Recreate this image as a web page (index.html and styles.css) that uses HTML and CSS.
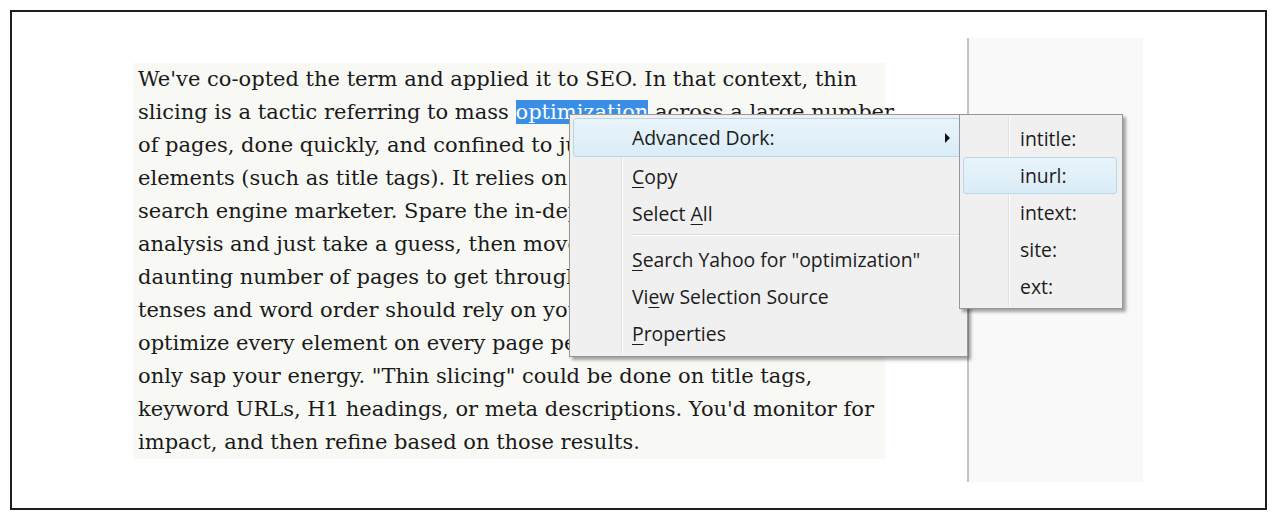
FILE: index.html
```html
<!DOCTYPE html>
<html>
<head>
<meta charset="utf-8">
<link rel="stylesheet" href="styles.css">
</head>
<body>
<div class="frame">
  <div class="page">
    <div class="article">
      <p class="text">We've co-opted the term and applied it to SEO. In that context, thin<br>slicing is a tactic referring to mass <span class="sel">optimization</span> across a large number<br>of pages, done quickly, and confined to just a few<br>elements (such as title tags). It relies on the<br>search engine marketer. Spare the in-depth<br>analysis and just take a guess, then move on<br>daunting number of pages to get through<br>tenses and word order should rely on your<br>optimize every element on every page per<br>only sap your energy. "Thin slicing" could be done on title tags,<br>keyword URLs, H1 headings, or meta descriptions. You'd monitor for<br>impact, and then refine based on those results.</p>
    </div>
    <div class="divider"></div>
    <div class="side"></div>
  </div>

  <div class="menu main-menu">
    <div class="gutter"></div>
    <div class="item active"><span class="label">Advanced Dork:</span><span class="arrow"></span></div>
    <div class="item"><span class="label"><u>C</u>opy</span></div>
    <div class="item"><span class="label">Select <u>A</u>ll</span></div>
    <div class="sep"></div>
    <div class="item"><span class="label"><u>S</u>earch Yahoo for "optimization"</span></div>
    <div class="item"><span class="label">Vi<u>e</u>w Selection Source</span></div>
    <div class="item"><span class="label"><u>P</u>roperties</span></div>
  </div>

  <div class="menu sub-menu">
    <div class="gutter"></div>
    <div class="item"><span class="label">intitle:</span></div>
    <div class="item active"><span class="label">inurl:</span></div>
    <div class="item"><span class="label">intext:</span></div>
    <div class="item"><span class="label">site:</span></div>
    <div class="item"><span class="label">ext:</span></div>
  </div>
</div>
</body>
</html>
```

FILE: styles.css
```css
html, body {
  margin: 0;
  padding: 0;
  background: #ffffff;
}

.frame {
  position: relative;
  margin: 10px 0 0 10px;
  width: 1257px;
  height: 500px;
  box-sizing: border-box;
  border: 2px solid #1e1e1e;
}

.page {
  display: flex;
  padding-top: 26px;
}

.article {
  width: 955px;
  flex: none;
}

.text {
  margin: 25px 0 0 121px;
  width: 752px;
  padding: 0 0 0 5px;
  box-sizing: border-box;
  background: #f8f9f5;
  font-family: "DejaVu Serif", Georgia, serif;
  font-size: 21px;
  line-height: 33px;
  color: #1a1a1a;
  white-space: nowrap;
}

.sel {
  background: #3a8ee6;
  color: #ffffff;
}

.divider {
  width: 2px;
  height: 444px;
  background: #c4c4c4;
  flex: none;
}

.side {
  width: 174px;
  height: 444px;
  background: #f9f9f9;
  flex: none;
}

.menu {
  position: absolute;
  box-sizing: border-box;
  background: #f0f0f0;
  border: 1px solid #979797;
  box-shadow: 3px 3px 3px rgba(0, 0, 0, 0.35);
  font-family: "Open Sans", "Noto Sans", sans-serif;
  font-size: 19.4px;
  color: #1c1c1c;
}

.main-menu {
  left: 557px;
  top: 102px;
  width: 399px;
  height: 243px;
  padding: 3px 6px 0 3px;
}

.sub-menu {
  left: 947px;
  top: 102px;
  width: 164px;
  height: 195px;
  padding: 5px 5px 0 3px;
}

.gutter {
  position: absolute;
  top: 2px;
  bottom: 2px;
  width: 1px;
  background: #e0e0e0;
  border-right: 1px solid #ffffff;
}

.main-menu .gutter { left: 51px; }
.sub-menu .gutter { left: 48px; }

.item {
  position: relative;
  display: flex;
  align-items: center;
  height: 37px;
  box-sizing: border-box;
  border: 1px solid transparent;
  border-radius: 3px;
}

.main-menu .item { padding-left: 58px; }
.sub-menu .item { padding-left: 56px; }

.item.active {
  border-color: #b4d7ea;
  background: linear-gradient(#eaf4fa, #d9ecf7);
}

.main-menu .item.active { height: 39px; }
.main-menu .item:nth-of-type(n+3) .label { padding-top: 2px; }

.label u {
  text-decoration-thickness: 1px;
  text-underline-offset: 3px;
}

.arrow {
  margin-left: auto;
  margin-right: 10px;
  width: 0;
  height: 0;
  border-top: 5px solid transparent;
  border-bottom: 5px solid transparent;
  border-left: 5px solid #111111;
}

.sep {
  height: 1px;
  margin: 3px 0 4px 58px;
  background: #dcdcdc;
  border-bottom: 1px solid #ffffff;
}
```
